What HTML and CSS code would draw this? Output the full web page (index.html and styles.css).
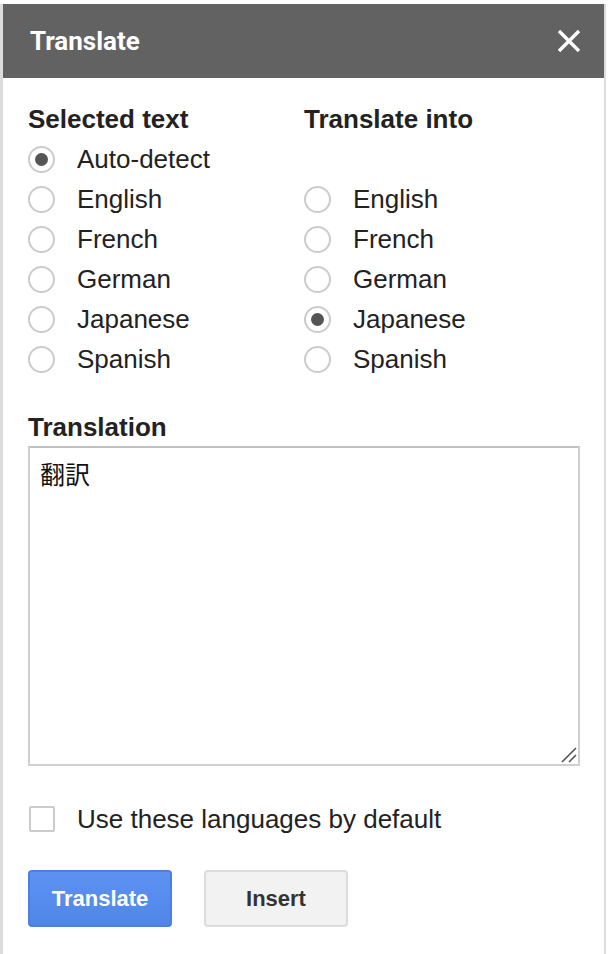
FILE: index.html
```html
<!DOCTYPE html>
<html>
<head>
<meta charset="utf-8">
<link rel="stylesheet" href="styles.css">
</head>
<body>
<div class="dialog">
  <div class="header">
    <div class="title">Translate</div>
    <svg class="close" width="24" height="24" viewBox="0 0 24 24"><path d="M2 2 L22 22 M22 2 L2 22" stroke="#fff" stroke-width="3.4" fill="none"/></svg>
  </div>
  <div class="body">
    <div class="columns">
      <div class="col">
        <div class="heading">Selected text</div>
        <div class="row"><span class="radio checked"></span><span>Auto-detect</span></div>
        <div class="row"><span class="radio"></span><span>English</span></div>
        <div class="row"><span class="radio"></span><span>French</span></div>
        <div class="row"><span class="radio"></span><span>German</span></div>
        <div class="row"><span class="radio"></span><span>Japanese</span></div>
        <div class="row"><span class="radio"></span><span>Spanish</span></div>
      </div>
      <div class="col">
        <div class="heading">Translate into</div>
        <div class="row"></div>
        <div class="row"><span class="radio"></span><span>English</span></div>
        <div class="row"><span class="radio"></span><span>French</span></div>
        <div class="row"><span class="radio"></span><span>German</span></div>
        <div class="row"><span class="radio checked"></span><span>Japanese</span></div>
        <div class="row"><span class="radio"></span><span>Spanish</span></div>
      </div>
    </div>
    <div class="heading translation-heading">Translation</div>
    <div class="output">
      <div class="output-text">翻訳</div>
      <svg class="resizer" width="16" height="16" viewBox="0 0 16 16"><path d="M15 1 L1 15 M15 8 L8 15" stroke="#555" stroke-width="1.6" fill="none"/></svg>
    </div>
    <div class="row check-row"><span class="checkbox"></span><span>Use these languages by default</span></div>
    <div class="buttons">
      <button class="btn primary">Translate</button>
      <button class="btn secondary">Insert</button>
    </div>
  </div>
</div>
</body>
</html>
```
FILE: styles.css
```css
html, body {
  margin: 0;
  padding: 0;
  background: #fff;
}
body {
  padding-top: 4px;
  font-family: "Liberation Sans", Arial, sans-serif;
  color: #222;
}
.dialog {
  margin-right: 2px;
  border-left: 3px solid #dcdcdc;
  border-right: 2px solid #dcdcdc;
  height: 950px;
  box-sizing: border-box;
}
.header {
  height: 74px;
  background: #626262;
  display: flex;
  align-items: center;
  justify-content: space-between;
  padding: 0 23px 0 27px;
}
.title {
  font-family: Roboto, "Liberation Sans", sans-serif;
  font-weight: 700;
  font-size: 26px;
  color: #fff;
}
.close {
  display: block;
}
.body {
  padding: 21px 25px 0 25px;
}
.columns {
  display: grid;
  grid-template-columns: 276px 1fr;
}
.heading {
  font-weight: 700;
  font-size: 26px;
  line-height: 40px;
  height: 40px;
}
.row {
  display: flex;
  align-items: center;
  height: 40px;
  font-size: 26px;
  gap: 22px;
}
.radio {
  width: 27px;
  height: 27px;
  box-sizing: border-box;
  border: 2px solid #cbcbcb;
  border-radius: 50%;
  display: flex;
  align-items: center;
  justify-content: center;
  flex-shrink: 0;
}
.radio.checked::after {
  content: "";
  width: 13px;
  height: 13px;
  border-radius: 50%;
  background: #555;
}
.translation-heading {
  margin-top: 29px;
  height: 38px;
  line-height: 38px;
}
.output {
  position: relative;
  width: 552px;
  height: 320px;
  box-sizing: border-box;
  border: 2px solid #d0d0d0;
  border-top-color: #c0c0c0;
  padding: 10px 10px;
}
.output-text {
  font-family: "Noto Sans CJK JP", sans-serif;
  font-size: 25px;
  line-height: 30px;
  color: #111;
}
.resizer {
  position: absolute;
  right: 1px;
  bottom: 1px;
}
.check-row {
  margin-top: 33px;
}
.checkbox {
  width: 26px;
  height: 26px;
  box-sizing: border-box;
  border: 2px solid #cccccc;
  border-radius: 2px;
  flex-shrink: 0;
  margin-left: 1px;
}
.buttons {
  display: flex;
  gap: 32px;
  margin-top: 31px;
}
.btn {
  width: 144px;
  height: 57px;
  box-sizing: border-box;
  border-radius: 4px;
  font-family: "Liberation Sans", Arial, sans-serif;
  font-weight: 700;
  font-size: 22px;
  padding: 0;
}
.primary {
  background: linear-gradient(#5d92f2, #4f86e8);
  border: 2px solid #4a7fe3;
  color: #fff;
}
.secondary {
  background: #f2f2f2;
  border: 2px solid #dcdcdc;
  color: #333;
}
```
